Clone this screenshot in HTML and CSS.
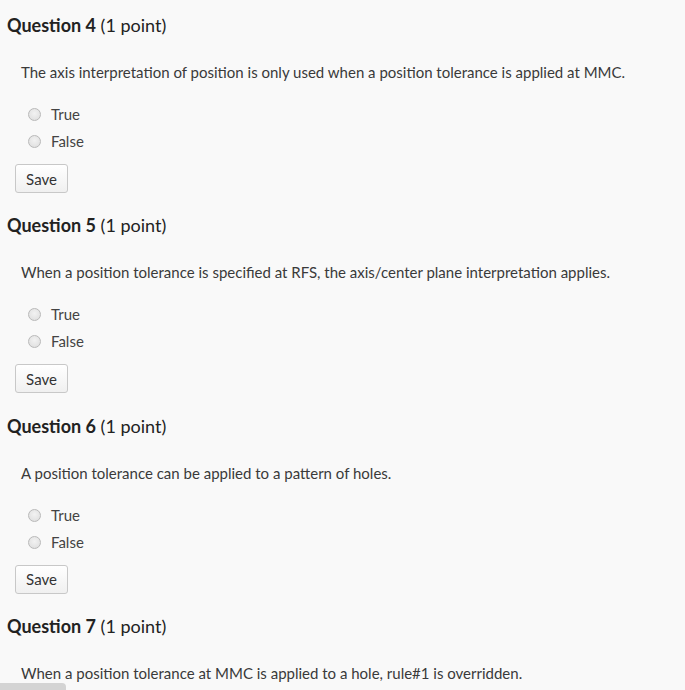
FILE: index.html
```html
<!DOCTYPE html>
<html>
<head>
<meta charset="utf-8">
<link rel="stylesheet" href="styles.css">
</head>
<body>
<div class="quiz">
  <section class="question">
    <h2 class="q-title"><b>Question 4</b> (1 point)</h2>
    <p class="q-text">The axis interpretation of position is only used when a position tolerance is applied at MMC.</p>
    <ul class="options">
      <li><label><input type="radio" name="q4"> True</label></li>
      <li><label><input type="radio" name="q4"> False</label></li>
    </ul>
    <button class="save">Save</button>
  </section>
  <section class="question">
    <h2 class="q-title"><b>Question 5</b> (1 point)</h2>
    <p class="q-text">When a position tolerance is specified at RFS, the axis/center plane interpretation applies.</p>
    <ul class="options">
      <li><label><input type="radio" name="q5"> True</label></li>
      <li><label><input type="radio" name="q5"> False</label></li>
    </ul>
    <button class="save">Save</button>
  </section>
  <section class="question">
    <h2 class="q-title"><b>Question 6</b> (1 point)</h2>
    <p class="q-text">A position tolerance can be applied to a pattern of holes.</p>
    <ul class="options">
      <li><label><input type="radio" name="q6"> True</label></li>
      <li><label><input type="radio" name="q6"> False</label></li>
    </ul>
    <button class="save">Save</button>
  </section>
  <section class="question last">
    <h2 class="q-title"><b>Question 7</b> (1 point)</h2>
    <p class="q-text">When a position tolerance at MMC is applied to a hole, rule#1 is overridden.</p>
  </section>
</div>
<div class="scroll-thumb"></div>
</body>
</html>
```
FILE: styles.css
```css
html, body {
  margin: 0;
  padding: 0;
  background: #f9f9f9;
  overflow: hidden;
}
body {
  font-family: Lato, "Open Sans", sans-serif;
  color: #333;
  font-size: 15px;
}
.quiz {
  padding: 14px 0 0 7px;
}
.question {
  height: 200.3px;
}
.question.last {
  height: auto;
}
.q-title {
  margin: 0;
  font-size: 18px;
  line-height: 22px;
  font-weight: normal;
  color: #222;
}
.q-title b {
  font-weight: bold;
}
.q-text {
  margin: 26px 0 0 14px;
  line-height: 20px;
  color: #3a3a3a;
}
.options {
  list-style: none;
  margin: 19px 0 0 21px;
  padding: 0;
}
.options li {
  height: 27px;
  line-height: 27px;
}
.options label {
  display: flex;
  align-items: center;
  gap: 10px;
  color: #444;
}
.options input {
  appearance: none;
  -webkit-appearance: none;
  width: 13px;
  height: 13px;
  margin: 0;
  border: 1px solid #b9b9b9;
  border-radius: 50%;
  background: radial-gradient(circle at 50% 40%, #f2f2f2 0%, #dcdcdc 100%);
  box-sizing: border-box;
}
.save {
  margin: 9px 0 0 8px;
  width: 53px;
  height: 29px;
  font-family: inherit;
  font-size: 15px;
  color: #333;
  background: linear-gradient(#ffffff, #f0f0f0);
  border: 1px solid #c8c8c8;
  border-radius: 3px;
  padding: 0;
}
.scroll-thumb {
  position: fixed;
  left: 0;
  bottom: 0;
  width: 66px;
  height: 7px;
  background: #d4d4d4;
  border-radius: 0 4px 0 0;
}
```
